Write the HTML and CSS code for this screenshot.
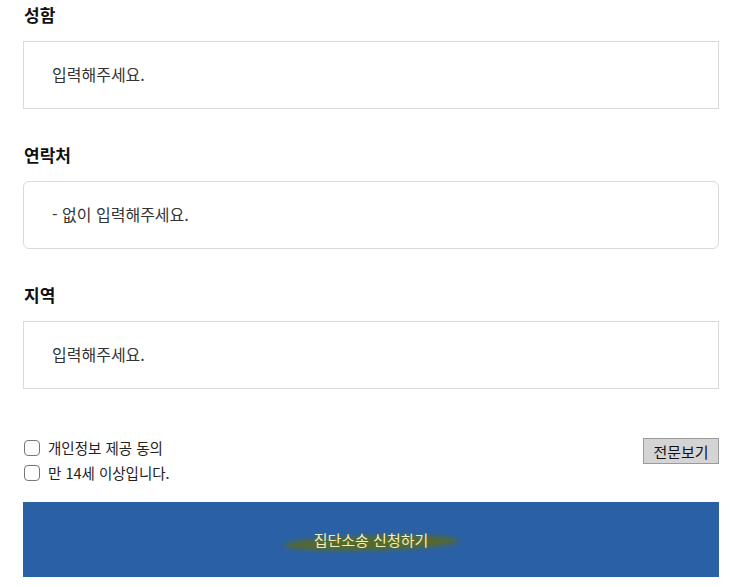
FILE: index.html
```html
<!DOCTYPE html>
<html lang="ko">
<head>
<meta charset="utf-8">
<link rel="stylesheet" href="styles.css">
</head>
<body>
<form class="form">
  <div class="field">
    <div class="label">성함</div>
    <div class="input">입력해주세요.</div>
  </div>
  <div class="field">
    <div class="label">연락처</div>
    <div class="input input-round">- 없이 입력해주세요.</div>
  </div>
  <div class="field">
    <div class="label">지역</div>
    <div class="input">입력해주세요.</div>
  </div>
  <div class="agree">
    <div class="agree-list">
      <label class="check"><span class="box"></span>개인정보 제공 동의</label>
      <label class="check"><span class="box"></span>만 14세 이상입니다.</label>
    </div>
    <span class="view-btn">전문보기</span>
  </div>
  <div class="submit">
    <span class="submit-text"><span class="brush"></span><span class="submit-label">집단소송 신청하기</span></span>
  </div>
</form>
</body>
</html>
```
FILE: styles.css
```css
* { box-sizing: border-box; }
body {
  margin: 0;
  background: #fff;
  font-family: "Noto Sans CJK KR", "Noto Sans", sans-serif;
  color: #222;
}
.form {
  width: 696px;
  margin-left: 23px;
  display: flex;
  flex-direction: column;
}
.field {
  display: flex;
  flex-direction: column;
  margin-bottom: 31px;
}
.label {
  height: 30px;
  line-height: 30px;
  font-size: 17px;
  font-weight: 700;
  color: #111;
  padding-left: 1px;
  margin-bottom: 11px;
}
.input {
  height: 68px;
  border: 1px solid #dadada;
  display: flex;
  align-items: center;
  padding-left: 28px;
  padding-bottom: 2px;
  font-size: 16px;
  color: #333;
}
.input-round { border-radius: 6px; }
.agree {
  margin-top: 15px;
  display: flex;
  justify-content: space-between;
  align-items: flex-start;
}
.agree-list {
  display: flex;
  flex-direction: column;
}
.check {
  display: flex;
  align-items: center;
  height: 25px;
  font-size: 14.5px;
  color: #222;
  padding-left: 1px;
}
.box {
  width: 16px;
  height: 16px;
  border: 1.5px solid #777;
  border-radius: 4px;
  margin-right: 8px;
}
.view-btn {
  margin-top: 3px;
  width: 76px;
  height: 26px;
  background: #d4d4d4;
  border: 1px solid #9a9a9a;
  font-size: 15px;
  color: #111;
  display: flex;
  align-items: center;
  justify-content: center;
}
.submit {
  margin-top: 17px;
  height: 75px;
  background: #2a60a6;
  display: flex;
  align-items: center;
  justify-content: center;
}
.submit-text {
  position: relative;
  display: inline-flex;
  align-items: center;
  justify-content: center;
}
.brush {
  position: absolute;
  left: -30px;
  right: -30px;
  top: 50%;
  height: 14px;
  margin-top: -4px;
  background: #56692a;
  border-radius: 50%;
  filter: blur(2.5px);
  transform: rotate(-1.5deg);
}
.submit-label {
  position: relative;
  font-size: 15px;
  color: #f3eeb4;
}
```
